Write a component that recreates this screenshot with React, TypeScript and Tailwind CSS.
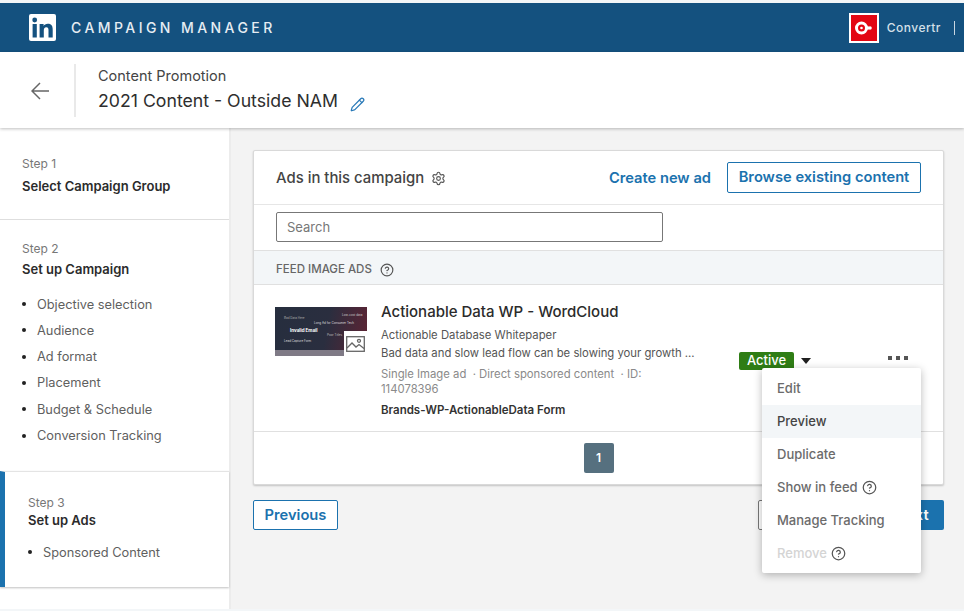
import React from 'react';
import { Pencil, Settings, CircleHelp } from 'lucide-react';

const objectives = ['Objective selection', 'Audience', 'Ad format', 'Placement', 'Budget & Schedule', 'Conversion Tracking'];

const Bullet: React.FC<{ label: string }> = ({ label }) => (
  <li className="flex items-center h-[26.3px] text-[12.8px] text-[#5f5f5f]">
    <span className="w-1 h-1 rounded-full bg-[#222] mr-[11px]" />
    {label}
  </li>
);

const MenuItem: React.FC<{ label: string; active?: boolean; muted?: boolean; help?: boolean }> = ({ label, active, muted, help }) => (
  <div className={`h-[33px] pl-[15px] flex items-center gap-[4px] text-[13px] font-medium ${active ? 'bg-[#f3f6f8] text-[#444]' : muted ? 'text-[#d4d4d4]' : 'text-[#6b6b6b]'}`}>
    {label}
    {help && <CircleHelp className="w-[15px] h-[15px] text-[#555]" strokeWidth={2} />}
  </div>
);

export default function App() {
  return (
    <div className="w-[964px] h-[611px] overflow-hidden flex flex-col bg-white font-['Inter','Liberation_Sans',sans-serif] relative">
      <div className="h-[3px] bg-[#f3f6f8]" />

      {/* Top bar */}
      <header className="h-[49px] bg-[#14517f] flex items-center pl-[29px] pr-[9px] shrink-0">
        <svg viewBox="0 0 27 27" className="w-[27px] h-[27px]">
          <rect width="27" height="27" rx="2" fill="#fff" />
          <rect x="3.6" y="10" width="4.2" height="13.5" fill="#14517f" />
          <circle cx="5.7" cy="6" r="2.4" fill="#14517f" />
          <path d="M10.6 10h4v1.9c.7-1.2 2.2-2.2 4.2-2.2 4 0 4.9 2.6 4.9 6v7.8h-4.2v-6.9c0-1.7-.2-3.3-2.2-3.3s-2.5 1.6-2.5 3.3v6.9h-4.2z" fill="#14517f" />
        </svg>
        <span className="ml-[15px] text-[14px] font-medium tracking-[0.245em] text-[#e6edf3]">CAMPAIGN MANAGER</span>
        <div className="ml-auto flex items-center">
          <div className="w-[30px] h-[30px] bg-[#e30613] border-2 border-white flex items-center justify-center">
            <svg viewBox="0 0 26 26" className="w-[26px] h-[26px]">
              <circle cx="10.5" cy="13" r="5" fill="none" stroke="#fff" strokeWidth="3" />
              <circle cx="10.5" cy="13" r="1.3" fill="#fff" />
              <rect x="14" y="11.5" width="4" height="3" fill="#fff" />
              <circle cx="19" cy="13" r="1.8" fill="#fff" />
            </svg>
          </div>
          <span className="ml-[8px] text-[12px] font-medium tracking-[0.04em] text-[#d5e0e9]">Convertr</span>
          <span className="ml-[13px] w-px h-[14px] bg-[#c8d6e1]" />
        </div>
      </header>

      {/* Campaign title */}
      <div className="h-[76px] shrink-0 bg-white flex items-center shadow-[0_1px_3px_rgba(0,0,0,0.25)] z-10">
        <div className="w-[76px] h-[53px] flex items-center pl-[31px] border-r-2 border-[#e9e9e9] mt-[1px]">
          <svg viewBox="0 0 18 18" className="w-[18px] h-[18px]" fill="none" stroke="#666" strokeWidth="1.5">
            <path d="M18 9H1.2M9 1 1 9l8 8" />
          </svg>
        </div>
        <div className="ml-[22px]">
          <div className="text-[14.5px] leading-[20px] text-[#444]">Content Promotion</div>
          <div className="flex items-center text-[17.7px] leading-[26px] text-[#2e2e2e] mt-[2px]">
            2021 Content - Outside NAM
            <Pencil className="ml-[12px] mt-[6px] w-[15px] h-[15px] text-[#2a7ab8]" strokeWidth={2} />
          </div>
        </div>
      </div>

      <div className="flex-1 flex min-h-0">
        {/* Steps */}
        <aside className="w-[231px] shrink-0 flex flex-col bg-white border-r-2 border-[#ececec]">
          <section className="h-[92px] pl-[22px] pt-[28px] border-b border-[#dedede]">
            <div className="text-[12px] leading-[16px] text-[#777]">Step 1</div>
            <div className="mt-[5px] text-[13px] leading-[18px] font-semibold text-[#2b2b2b]">Select Campaign Group</div>
          </section>
          <section className="h-[251px] pl-[22px] pt-[21px]">
            <div className="text-[12px] leading-[16px] text-[#777]">Step 2</div>
            <div className="text-[13px] leading-[24px] font-semibold text-[#2b2b2b]">Set up Campaign</div>
            <ul className="mt-[10px]">
              {objectives.map(item => <Bullet key={item} label={item} />)}
            </ul>
          </section>
          <section className="h-[116px] pl-[23px] pt-[23px] border-l-[5px] border-l-[#1b72ae] border-t border-t-[#e4e4e4] shadow-[0_1px_2px_rgba(0,0,0,0.25)]">
            <div className="text-[12px] leading-[16px] text-[#777]">Step 3</div>
            <div className="text-[13px] leading-[18px] font-semibold text-[#2b2b2b]">Set up Ads</div>
            <ul className="mt-[10px]">
              <Bullet label="Sponsored Content" />
            </ul>
          </section>
        </aside>

        {/* Main */}
        <main className="flex-1 bg-[#f3f3f3] pt-[22px] pl-[22px] pr-[20px]">
          <div className="bg-white border border-[#d9d9d9] rounded-[2px] shadow-[0_1px_2px_rgba(0,0,0,0.2)] h-[335px] flex flex-col">
            <div className="h-[54px] shrink-0 flex items-center pl-[22px] pr-[22px] border-b border-[#e6e6e6]">
              <span className="pt-[1px] text-[14.9px] font-medium text-[#444]">Ads in this campaign</span>
              <Settings className="ml-[7px] mt-[1px] w-[15px] h-[15px] text-[#555]" strokeWidth={1.8} />
              <span className="ml-auto pt-[1px] text-[14.7px] font-semibold text-[#1b72ae]">Create new ad</span>
              <span className="ml-[16px] h-[31px] w-[194px] flex items-center justify-center border border-[#1b72ae] rounded-[2px] text-[14.7px] font-semibold text-[#1b72ae]">Browse existing content</span>
            </div>
            <div className="h-[46px] shrink-0 flex pt-[7px] pl-[22px] border-b border-[#e0e0e0]">
              <div className="w-[387px] h-[30px] border border-[#777] rounded-[2px] flex items-center pl-[10px] pt-[1px] text-[13px] text-[#777]">Search</div>
            </div>
            <div className="h-[34px] shrink-0 flex items-center pl-[22px] pt-[4px] bg-[#f3f6f8] border-b border-[#e0e0e0]">
              <span className="text-[11.5px] font-medium text-[#666]">FEED IMAGE ADS</span>
              <CircleHelp className="ml-[8px] w-[14px] h-[14px] text-[#555]" strokeWidth={2} />
            </div>
            <div className="h-[147px] shrink-0 flex pl-[21px] border-b border-[#e0e0e0] relative">
              {/* Thumbnail */}
              <div className="mt-[22px] w-[92px] h-[49px] relative overflow-hidden bg-[linear-gradient(100deg,#262e3e_0%,#2a2e3f_55%,#5e2333_100%)] shrink-0">
                <span className="absolute left-[9px] top-[10px] text-[3px] leading-none text-[#aaa] whitespace-nowrap">Bad Data Here</span>
                <span className="absolute left-[15px] top-[22px] text-[4.5px] font-bold leading-none text-white whitespace-nowrap">Invalid Email</span>
                <span className="absolute left-[39px] top-[15px] text-[3px] leading-none text-[#ddd] whitespace-nowrap">Long Ad for Consumer Tech</span>
                <span className="absolute left-[67px] top-[7px] text-[3px] leading-none text-[#ccc] whitespace-nowrap">Low-cost data</span>
                <span className="absolute left-[9px] top-[33px] text-[3px] leading-none text-[#ddd] whitespace-nowrap">Lead Capture Form</span>
                <span className="absolute left-[52px] top-[27px] text-[3px] leading-none text-[#bbb] whitespace-nowrap">Poor Titles</span>
                <div className="absolute left-0 right-0 bottom-0 h-[6px] bg-[#7f7a86]" />
                <div className="absolute right-0 bottom-0 w-[23px] h-[25px] bg-white flex items-center justify-center">
                  <svg viewBox="0 0 19 16" className="w-[19px] h-[16px]" fill="none" stroke="#666" strokeWidth="1.3">
                    <rect x=".7" y=".7" width="17.6" height="14.6" />
                    <path d="m1 12 5-5 4 4 3-2.5 5 4" />
                    <circle cx="13" cy="4.8" r="1.5" />
                  </svg>
                </div>
              </div>
              <div className="ml-[14px] pt-[16px] w-[320px]">
                <div className="text-[15px] leading-[22px] font-medium text-[#2b2b2b] whitespace-nowrap">Actionable Data WP - WordCloud</div>
                <div className="mt-[3px] text-[11.3px] leading-[18px] text-[#555]">Actionable Database Whitepaper</div>
                <div className="text-[11.3px] leading-[18px] text-[#555] whitespace-nowrap">Bad data and slow lead flow can be slowing your growth ...</div>
                <div className="mt-[5px] text-[11.3px] leading-[15px] text-[#8a8a8a]">Single Image ad&nbsp; · Direct sponsored content&nbsp; · ID:<br />114078396</div>
                <div className="mt-[5px] text-[11.5px] leading-[16px] font-semibold text-[#333] whitespace-nowrap">Brands-WP-ActionableData Form</div>
              </div>
              <div className="absolute left-[485px] top-[67px] h-[18px] w-[55px] rounded-[2px] bg-[#2f7d15] flex items-center justify-center text-[13px] font-medium text-white">Active</div>
              <div className="absolute left-[547px] top-[73px] w-0 h-0 border-x-[5px] border-x-transparent border-t-[6px] border-t-[#1f1f1f]" />
              <div className="absolute left-[634px] top-[71px] flex gap-[4px]">
                <span className="w-[4px] h-[4px] bg-[#555]" />
                <span className="w-[4px] h-[4px] bg-[#555]" />
                <span className="w-[4px] h-[4px] bg-[#555]" />
              </div>
            </div>
            <div className="flex-1 flex items-center justify-center">
              <span className="w-[30px] h-[30px] rounded-[2px] bg-[#56707f] flex items-center justify-center text-[12px] font-semibold text-white">1</span>
            </div>
          </div>

          <div className="mt-[15px] flex items-center">
            <span className="w-[85px] h-[30px] flex items-center justify-center bg-white border border-[#1b72ae] rounded-[2px] text-[14.7px] font-semibold text-[#1b72ae]">Previous</span>
            <span className="ml-auto w-[70px] h-[30px] border border-[#777] rounded-[2px] bg-white" />
            <span className="ml-[52px] w-[64px] h-[30px] flex items-center justify-center bg-[#1b72ae] rounded-[2px] text-[14.7px] font-semibold text-white">Next</span>
          </div>
        </main>
      </div>

      <div className="h-[2px] bg-[#f3f6f8] shrink-0" />

      {/* Row actions menu */}
      <div className="absolute left-[762px] top-[368px] w-[159px] h-[205px] py-[4px] bg-white rounded-[2px] shadow-[0_2px_8px_rgba(0,0,0,0.28)]">
        <MenuItem label="Edit" />
        <MenuItem label="Preview" active />
        <MenuItem label="Duplicate" />
        <MenuItem label="Show in feed" help />
        <MenuItem label="Manage Tracking" />
        <MenuItem label="Remove" muted help />
      </div>
    </div>
  );
}
